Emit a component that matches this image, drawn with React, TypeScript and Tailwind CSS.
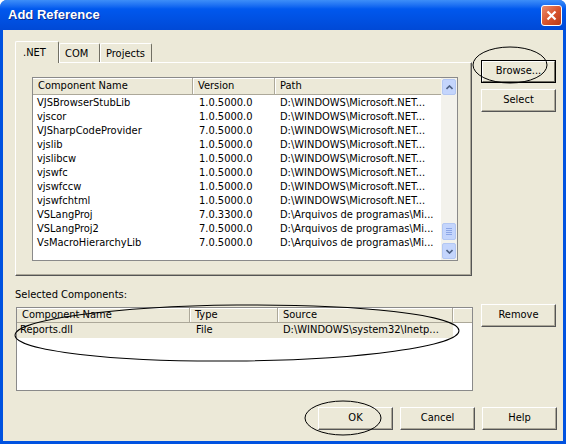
import React from 'react';

const netRows = [
  ['VJSBrowserStubLib', '1.0.5000.0', 'D:\\WINDOWS\\Microsoft.NET...'],
  ['vjscor', '1.0.5000.0', 'D:\\WINDOWS\\Microsoft.NET...'],
  ['VJSharpCodeProvider', '7.0.5000.0', 'D:\\WINDOWS\\Microsoft.NET...'],
  ['vjslib', '1.0.5000.0', 'D:\\WINDOWS\\Microsoft.NET...'],
  ['vjslibcw', '1.0.5000.0', 'D:\\WINDOWS\\Microsoft.NET...'],
  ['vjswfc', '1.0.5000.0', 'D:\\WINDOWS\\Microsoft.NET...'],
  ['vjswfccw', '1.0.5000.0', 'D:\\WINDOWS\\Microsoft.NET...'],
  ['vjswfchtml', '1.0.5000.0', 'D:\\WINDOWS\\Microsoft.NET...'],
  ['VSLangProj', '7.0.3300.0', 'D:\\Arquivos de programas\\Mi...'],
  ['VSLangProj2', '7.0.5000.0', 'D:\\Arquivos de programas\\Mi...'],
  ['VsMacroHierarchyLib', '7.0.5000.0', 'D:\\Arquivos de programas\\Mi...'],
];

function Button({ label, isDefault }: { label: string; isDefault?: boolean }) {
  if (isDefault) {
    return (
      <div className="w-[75px] h-[23px] border border-black">
        <div className="w-full h-full flex items-center justify-center bg-[#ece9d8] border-t border-l border-white border-b border-r border-b-[#716f64] border-r-[#716f64]">
          {label}
        </div>
      </div>
    );
  }
  return (
    <div className="w-[75px] h-[23px] flex items-center justify-center bg-[#ece9d8] border-t border-l border-white border-b border-r border-b-[#555] border-r-[#555] shadow-[inset_-1px_-1px_0_#aca899]">
      {label}
    </div>
  );
}

function HeaderCell({ label, width, last }: { label: string; width: string; last?: boolean }) {
  return (
    <div className={`${width} h-full flex items-center pl-[5px] ${last ? 'flex-1' : 'border-r border-[#aca899] shadow-[1px_0_0_#fff]'}`}>
      {label}
    </div>
  );
}

function ScrollBtn({ up }: { up?: boolean }) {
  return (
    <div className="w-[14px] h-[16px] mx-auto rounded-[2px] bg-[#c4d5fc] border border-[#b3c7f3] flex items-center justify-center">
      <svg width="7" height="5" viewBox="0 0 7 5">
        <path d={up ? 'M0.5 4 L3.5 1 L6.5 4' : 'M0.5 1 L3.5 4 L6.5 1'} stroke="#4d6185" strokeWidth="1.6" fill="none" />
      </svg>
    </div>
  );
}

export default function App() {
  return (
    <div className="w-[566px] h-[444px] relative flex flex-col bg-[#0052e0] rounded-t-[7px] font-['DejaVu_Sans_Condensed','Liberation_Sans',sans-serif] text-[11px] text-black">
      {/* title bar */}
      <div className="h-[30px] flex items-center justify-between pl-[8px] pr-[4px] rounded-t-[7px] bg-gradient-to-b from-[#3d8ef8] via-[#0058ee] via-30% to-[#0049d6]">
        <span className="font-['Liberation_Sans',sans-serif] font-bold text-[13px] text-white [text-shadow:1px_1px_0_#0a2a8a]">Add Reference</span>
        <div className="w-[21px] h-[21px] rounded-[3px] border border-white bg-gradient-to-br from-[#e98b6c] via-[#d9552e] to-[#b93a17] flex items-center justify-center">
          <svg width="11" height="11" viewBox="0 0 11 11">
            <path d="M1.5 1.5 L9.5 9.5 M9.5 1.5 L1.5 9.5" stroke="#fff" strokeWidth="2.2" />
          </svg>
        </div>
      </div>

      {/* client area */}
      <div className="flex-1 mx-[3px] mb-[3px] bg-[#ece9d8] flex flex-col">
        <div className="flex pt-[11px] pl-[12px]">
          <div className="w-[457px] flex flex-col">
            <div className="h-[21px] flex items-end">
              <div className="relative z-10 w-[44px] h-[22px] -mb-[1px] bg-[#ece9d8] border-t border-l border-white border-r border-r-[#716f64] rounded-t-[2px] pl-[7px] pt-[3px]">
                .NET
              </div>
              <div className="w-[41px] h-[19px] border-t border-l border-white border-r border-r-[#716f64] rounded-t-[2px] pl-[5px] pt-[2px]">
                COM
              </div>
              <div className="w-[52px] h-[19px] border-t border-l border-white border-r border-r-[#716f64] rounded-t-[2px] pl-[5px] pt-[2px]">
                Projects
              </div>
            </div>
            <div className="h-[214px] border-t border-l border-white border-r border-b border-r-[#555] border-b-[#555] shadow-[inset_-1px_-1px_0_#aca899] pl-[16px] pt-[14px]">
              <div className="w-[426px] h-[184px] border border-[#8a8a8a] bg-white flex">
                <div className="flex-1 flex flex-col">
                  <div className="h-[17px] flex bg-[#ece9d8] border-b border-[#aca899] shadow-[inset_0_1px_0_#fff]">
                    <HeaderCell label="Component Name" width="w-[160px]" />
                    <HeaderCell label="Version" width="w-[82px]" />
                    <HeaderCell label="Path" width="w-[166px]" last />
                  </div>
                  <div className="pt-[1px]">
                    {netRows.map((r) => (
                      <div key={r[0]} className="h-[14px] flex items-center">
                        <div className="w-[160px] pl-[4px]">{r[0]}</div>
                        <div className="w-[82px] pl-[6px]">{r[1]}</div>
                        <div className="flex-1 pl-[5px] whitespace-nowrap">{r[2]}</div>
                      </div>
                    ))}
                  </div>
                </div>
                <div className="w-[17px] bg-[#f3f2ec] flex flex-col py-[1px]">
                  <ScrollBtn up />
                  <div className="flex-1 relative">
                    <div className="absolute left-[1px] top-[128px] w-[14px] h-[17px] rounded-[2px] bg-[#c4d5fc] border border-[#b3c7f3] flex flex-col items-center justify-center gap-[1px]">
                      <div className="w-[6px] h-px bg-[#8ca6e6]" />
                      <div className="w-[6px] h-px bg-[#8ca6e6]" />
                      <div className="w-[6px] h-px bg-[#8ca6e6]" />
                      <div className="w-[6px] h-px bg-[#8ca6e6]" />
                    </div>
                  </div>
                  <ScrollBtn />
                </div>
              </div>
            </div>
          </div>
          <div className="ml-[9px] pt-[19px] flex flex-col gap-[6px]">
            <Button label="Browse..." isDefault />
            <Button label="Select" />
          </div>
        </div>

        <div className="flex pl-[12px] mt-[12px]">
          <div className="w-[458px] flex flex-col">
            <div className="h-[13px] leading-[13px]">Selected Components:</div>
            <div className="ml-[1px] mt-[6px] w-[457px] h-[84px] border border-[#8a8a8a] bg-white flex flex-col">
              <div className="h-[15px] flex bg-[#ece9d8] border-b border-[#aca899] shadow-[inset_0_1px_0_#fff]">
                <HeaderCell label="Component Name" width="w-[173px]" />
                <HeaderCell label="Type" width="w-[88px]" />
                <HeaderCell label="Source" width="w-[175px]" />
                <HeaderCell label="" width="w-[18px]" last />
              </div>
              <div className="h-[15px] w-[436px] flex items-center bg-[#ece9d8]">
                <div className="w-[173px] pl-[3px]">Reports.dll</div>
                <div className="w-[88px] pl-[6px]">File</div>
                <div className="flex-1 pl-[5px] whitespace-nowrap">D:\WINDOWS\system32\Inetp...</div>
              </div>
            </div>
          </div>
          <div className="ml-[8px] pt-[16px]">
            <Button label="Remove" />
          </div>
        </div>

        <div className="flex justify-end gap-[7px] pr-[6px] mt-[16px]">
          <Button label="OK" />
          <Button label="Cancel" />
          <Button label="Help" />
        </div>
      </div>

      {/* hand-drawn annotations */}
      <svg className="absolute inset-0 pointer-events-none" width="566" height="444" viewBox="0 0 566 444">
        <ellipse cx="510" cy="65" rx="37" ry="18" stroke="#000" strokeWidth="1" fill="none" />
        <ellipse cx="237" cy="333" rx="222" ry="28" stroke="#000" strokeWidth="1" fill="none" transform="rotate(-0.6 237 333)" />
        <ellipse cx="343" cy="418" rx="38" ry="17" stroke="#000" strokeWidth="1" fill="none" />
      </svg>
    </div>
  );
}
